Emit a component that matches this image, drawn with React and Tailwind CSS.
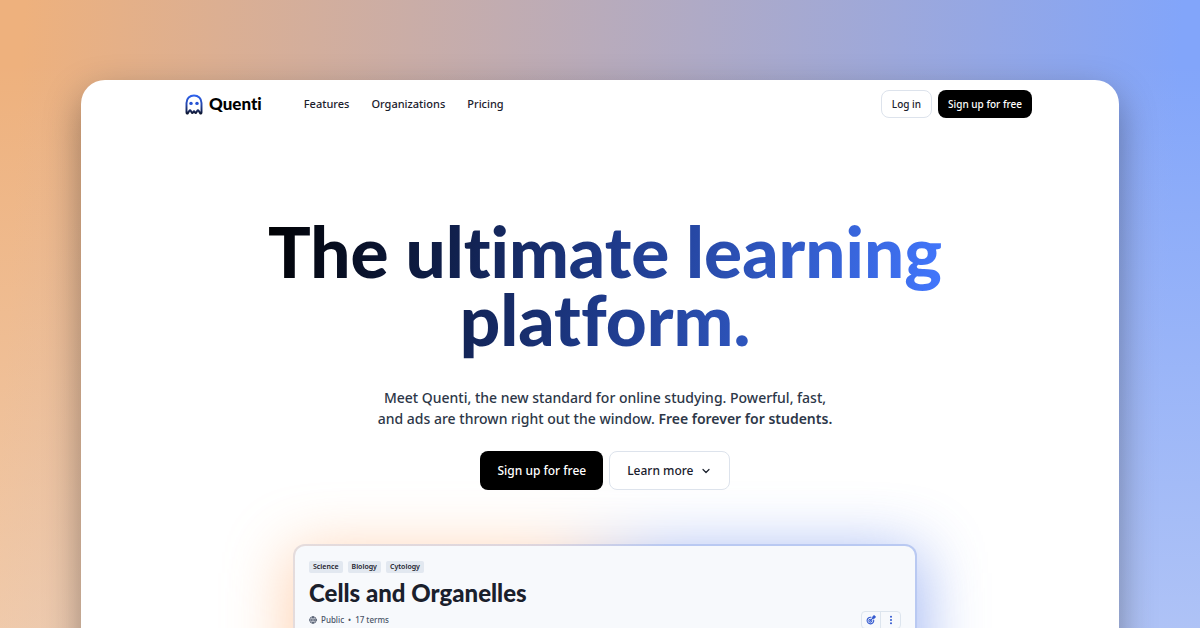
import { ChevronDown, Globe } from "lucide-react";

function Ghost() {
  return (
    <svg viewBox="0 0 24 28" className="h-[21px] w-[18px]" fill="none" aria-hidden="true">
      <defs>
        <linearGradient id="ghost" x1="12" y1="0" x2="12" y2="28" gradientUnits="userSpaceOnUse">
          <stop offset="0" stopColor="#2f66f5" />
          <stop offset="0.5" stopColor="#2547ad" />
          <stop offset="1" stopColor="#0b1020" />
        </linearGradient>
      </defs>
      <path
        d="M2 24.800V12C2 6 6.300 2 12 2s10 4 10 10v12.800c0 1.500-1.200 1.700-1.800.7L18.200 22.200c-.5-.8-1.400-.8-1.800 0l-1.300 2.600c-.4.8-1.300.8-1.700 0l-.6-1.200c-.4-.8-1.200-.8-1.600 0l-.6 1.200c-.4.8-1.300.8-1.700 0l-1.300-2.600c-.4-.8-1.300-.8-1.800 0l-2 3.300c-.6 1-1.800.8-1.800-.7Z"
        stroke="url(#ghost)"
        strokeWidth="2.600"
        strokeLinejoin="round"
      />
      <circle cx="8" cy="12.500" r="2.300" fill="#2653d4" />
      <circle cx="16" cy="12.500" r="2.300" fill="#2653d4" />
    </svg>
  );
}

function Target() {
  return (
    <svg viewBox="0 0 24 24" className="size-2.5" fill="none" stroke="currentColor" strokeWidth="2.600" strokeLinecap="round" strokeLinejoin="round" aria-hidden="true">
      <path d="M12 5.500A8 8 0 1 0 18.500 12" />
      <path d="M10.500 10a3.500 3.500 0 1 0 3.500 3.500" />
      <path d="M10.500 13.500l7-7" />
      <path d="M16.500 7.500V4.500l3-3 .8 2.200 2.200.8-3 3Z" fill="currentColor" />
    </svg>
  );
}

function Dots() {
  return (
    <svg viewBox="0 0 24 24" className="size-2.5" fill="currentColor" aria-hidden="true">
      <circle cx="12" cy="4" r="2.400" />
      <circle cx="12" cy="12" r="2.400" />
      <circle cx="12" cy="20" r="2.400" />
    </svg>
  );
}

const links = ["Features", "Organizations", "Pricing"];
const tags = ["Science", "Biology", "Cytology"];

export default function App() {
  return (
    <div className="h-screen overflow-hidden bg-[linear-gradient(to_bottom,transparent_10%,rgba(243,240,240,0.5)_125%),linear-gradient(93deg,#eeb17d_2%,#82a5fa_96%)] px-[81px] pt-20 font-['Noto_Sans','Open_Sans',sans-serif]">
      <div className="min-h-screen overflow-hidden rounded-t-3xl bg-white pl-2.5 shadow-[0_14px_36px_rgba(0,0,0,0.34)]">
        <header className="mx-auto flex max-w-[854px] items-center pt-2.5 pl-[7px]">
          <a href="#home" className="flex items-center gap-1.5">
            <Ghost />
            <span className="font-['Lato',sans-serif] text-[17px] leading-5 font-black text-black [font-variant-ligatures:none]">Quenti</span>
          </a>
          <nav className="ml-[42px] flex gap-[22px] text-[11px] leading-4 font-medium text-[#1a202c]">
            {links.map((link) => (
              <a key={link} href={"#" + link.toLowerCase()}>{link}</a>
            ))}
          </nav>
          <div className="ml-auto flex gap-1.5 text-[10px] font-medium">
            <button className="h-7 rounded-lg border border-[#dde3ec] px-2.5 text-[#1a202c]">Log in</button>
            <button className="h-7 rounded-lg bg-black px-2.5 text-white">Sign up for free</button>
          </div>
        </header>

        <main className="flex flex-col items-center">
          <h1 className="mt-[99px] max-w-[690px] bg-[linear-gradient(100deg,#000_0%,#1e3a8a_50%,#4378ff_98%)] bg-clip-text pb-3 text-center font-['Lato',sans-serif] text-[71px] leading-[68px] font-black text-transparent [font-variant-ligatures:none]">
            The ultimate learning platform.
          </h1>
          <p className="mt-[22px] text-center text-sm leading-[21px] font-medium text-[#2d3748]">
            Meet Quenti, the new standard for online studying. Powerful, fast,
            <br />
            and ads are thrown right out the window. <strong className="font-semibold">Free forever for students.</strong>
          </p>
          <div className="relative z-10 mt-[22px] flex gap-1.5 text-xs font-medium">
            <button className="h-[39px] rounded-lg bg-black px-[17px] text-white">Sign up for free</button>
            <button className="flex h-[39px] items-center gap-1.5 rounded-lg border border-[#dde3ec] bg-white px-[17px] text-[#1a202c]">
              Learn more
              <ChevronDown className="size-3" strokeWidth={2.4} aria-hidden="true" />
            </button>
          </div>

          <div className="relative mt-[54px] w-[624px] max-w-full">
            <div className="absolute -inset-x-1 top-2 h-[420px] bg-[linear-gradient(90deg,#ffb27a_0%,#ffb27a_40%,#5e82ea_60%,#5e82ea_100%)] opacity-60 blur-[32px]" />
            <div className="relative h-[420px] rounded-xl bg-[linear-gradient(90deg,#e5dcdc_0%,#ddd5dd_40%,#b9c9f2_60%,#b9c9f2_100%)] p-0.5">
              <section className="h-full rounded-[10px] bg-[#f7f9fc] px-3.5 pt-[15px]">
                <ul className="flex gap-[5px] text-[7px] leading-3 font-semibold text-[#1a202c]">
                  {tags.map((tag) => (
                    <li key={tag} className="rounded-xs bg-[#e2e8f0] px-1">{tag}</li>
                  ))}
                </ul>
                <h2 className="mt-1.5 font-['Lato',sans-serif] text-2xl leading-7 font-black text-[#1a202c]">Cells and Organelles</h2>
                <div className="mt-1 flex items-center justify-between">
                  <p className="flex items-center gap-1 text-[8px] leading-4 font-medium text-[#4a5568]">
                    <Globe className="size-2" strokeWidth={2.6} aria-hidden="true" />
                    <span>Public</span>
                    <span>•</span>
                    <span>17 terms</span>
                  </p>
                  <div className="flex divide-x divide-[#dde5ee] rounded border border-[#dde5ee] text-[#3157cf]">
                    <button aria-label="Study goals" className="grid h-4 w-[19px] place-items-center"><Target /></button>
                    <button aria-label="More options" className="grid h-4 w-[19px] place-items-center"><Dots /></button>
                  </div>
                </div>
              </section>
            </div>
          </div>
        </main>
      </div>
    </div>
  );
}
